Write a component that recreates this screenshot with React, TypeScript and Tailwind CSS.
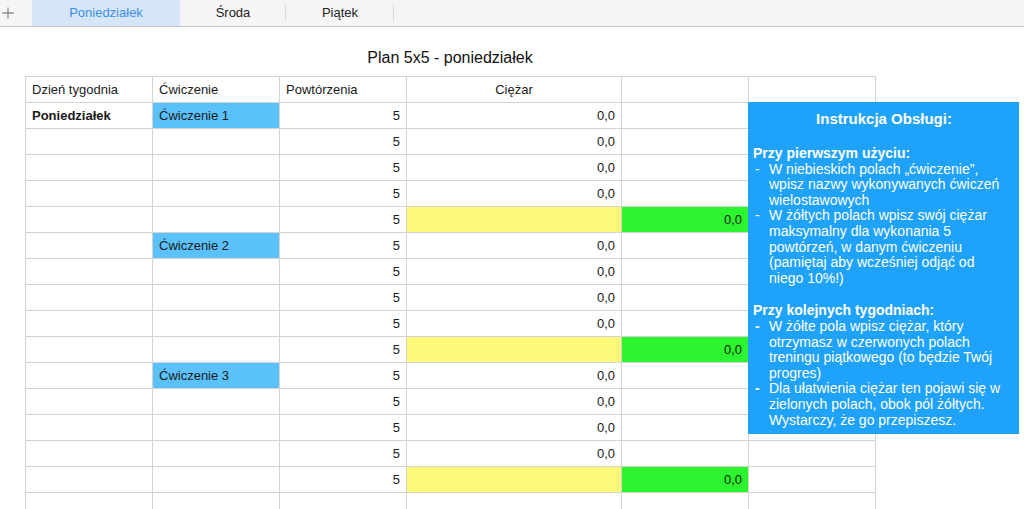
import React from "react";

const font = { fontFamily: '"Liberation Sans", Arial, Helvetica, sans-serif' };

function Cell({
  children,
  className = "",
}: {
  children?: React.ReactNode;
  className?: string;
}) {
  return (
    <div
      className={`h-[26px] border-r border-b border-[#d3d3d3] px-[6px] flex items-center text-[13px] text-[#1a1a1a] whitespace-nowrap overflow-hidden ${className}`}
    >
      {children}
    </div>
  );
}

function Line({ children, bold = false }: { children: React.ReactNode; bold?: boolean }) {
  return <div className={bold ? "font-bold" : ""}>{children}</div>;
}

function Bullet({ lines, boldDash = false }: { lines: string[]; boldDash?: boolean }) {
  return (
    <div className="flex">
      <div className={`w-[16px] shrink-0 pl-[2px] ${boldDash ? "font-bold" : ""}`}>-</div>
      <div>
        {lines.map((l, i) => (
          <div key={i}>{l}</div>
        ))}
      </div>
    </div>
  );
}

export default function App() {
  const rows = Array.from({ length: 16 }, (_, i) => i);
  return (
    <div className="w-[1024px] h-[509px] overflow-hidden bg-white" style={font}>
      {/* Tab bar */}
      <div className="h-[27px] bg-[#f5f5f5] border-b border-[#c8c8c8] flex items-stretch">
        <div className="w-[32px] flex items-center justify-start pl-[2px]">
          <svg width="12" height="12" viewBox="0 0 12 12">
            <path d="M6 0.5V11.5M0.5 6H11.5" stroke="#8c8c8c" strokeWidth="1.3" />
          </svg>
        </div>
        <div className="w-[148px] bg-[#d6e6f9] flex items-center justify-center text-[13px] text-[#3f8ee6]">
          Poniedziałek
        </div>
        <div className="w-[106px] flex items-center justify-center text-[13px] text-[#222] relative">
          Środa
          <div className="absolute right-0 top-[5px] h-[16px] w-px bg-[#d8d8d8]" />
        </div>
        <div className="w-[108px] flex items-center justify-center text-[13px] text-[#222] relative">
          Piątek
          <div className="absolute right-0 top-[5px] h-[16px] w-px bg-[#d8d8d8]" />
        </div>
      </div>

      {/* Title */}
      <div className="w-[900px] pt-[21px] pb-[8px] text-center text-[16px] leading-[20px] text-[#111]">
        Plan 5x5 - poniedziałek
      </div>

      {/* Table */}
      <div className="relative ml-[25px] w-[851px]">
        <div className="grid grid-cols-[127px_127px_127px_215px_127px_127px] border-l border-t border-[#d3d3d3]">
          <Cell>Dzień tygodnia</Cell>
          <Cell>Ćwiczenie</Cell>
          <Cell>Powtórzenia</Cell>
          <Cell className="justify-center">Ciężar</Cell>
          <Cell />
          <Cell />
          {rows.map((i) => {
            const isBlue = i < 15 && i % 5 === 0;
            const isYellow = i < 15 && i % 5 === 4;
            const hasData = i < 15;
            return (
              <React.Fragment key={i}>
                <Cell className={i === 0 ? "font-bold" : ""}>{i === 0 ? "Poniedziałek" : ""}</Cell>
                <Cell className={isBlue ? "bg-[#5bc1fb]" : ""}>
                  {isBlue ? `Ćwiczenie ${i / 5 + 1}` : ""}
                </Cell>
                <Cell className="justify-end">{hasData ? "5" : ""}</Cell>
                <Cell className={`justify-end ${isYellow ? "bg-[#fff97a]" : ""}`}>
                  {hasData && !isYellow ? "0,0" : ""}
                </Cell>
                <Cell className={`justify-end ${isYellow ? "bg-[#2cf52f]" : ""}`}>
                  {isYellow ? "0,0" : ""}
                </Cell>
                <Cell />
              </React.Fragment>
            );
          })}
        </div>

        {/* Instruction box */}
        <div className="absolute left-[723px] top-[26px] w-[271px] h-[332px] bg-[#1fa2fa] text-white text-[14px] leading-[15.6px] pl-[5px] pr-[4px] pt-[8px]">
          <div className="text-center font-bold text-[15px] leading-[18px]">Instrukcja Obsługi:</div>
          <div className="mt-[18px]">
            <Line bold>Przy pierwszym użyciu:</Line>
            <Bullet
              lines={[
                "W niebieskich polach „ćwiczenie”,",
                "wpisz nazwy wykonywanych ćwiczeń",
                "wielostawowych",
              ]}
            />
            <Bullet
              lines={[
                "W żółtych polach wpisz swój ciężar",
                "maksymalny dla wykonania 5",
                "powtórzeń, w danym ćwiczeniu",
                "(pamiętaj aby wcześniej odjąć od",
                "niego 10%!)",
              ]}
            />
          </div>
          <div className="mt-[17px]">
            <Line bold>Przy kolejnych tygodniach:</Line>
            <Bullet
              boldDash
              lines={[
                "W żółte pola wpisz ciężar, który",
                "otrzymasz w czerwonych polach",
                "treningu piątkowego (to będzie Twój",
                "progres)",
              ]}
            />
            <Bullet
              boldDash
              lines={[
                "Dla ułatwienia ciężar ten pojawi się w",
                "zielonych polach, obok pól żółtych.",
                "Wystarczy, że go przepiszesz.",
              ]}
            />
          </div>
        </div>
      </div>
    </div>
  );
}
